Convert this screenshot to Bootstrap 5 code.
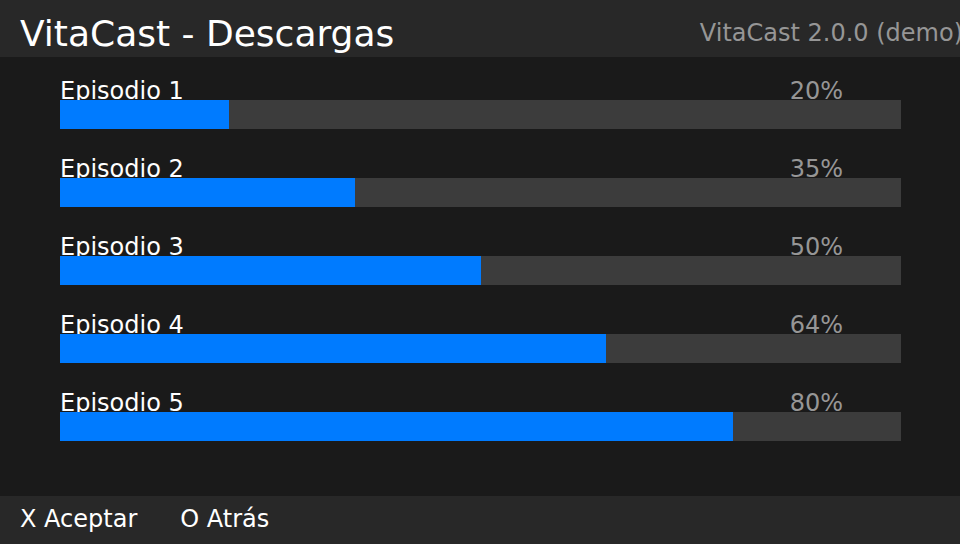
<!DOCTYPE html>
<html lang="es">
<head>
<meta charset="utf-8">
<meta name="viewport" content="width=device-width, initial-scale=1">
<title>VitaCast - Descargas</title>
<link href="https://cdn.jsdelivr.net/npm/bootstrap@5.3.0/dist/css/bootstrap.min.css" rel="stylesheet">
<style>
body { background: #1a1a1a; color: #fff; font-family: "DejaVu Sans", sans-serif; font-size: 24px; line-height: 28px; }
.bar-band { background: #282828; white-space: nowrap; }
.top-band { padding: 13px 0 2px 20px; }
.app-title { font-size: 36px; line-height: 42px; }
.app-version { line-height: 40px; margin-right: -3px; }
.muted-text { color: #969696; }
.downloads { padding: 20px 59px 20px 60px; }
.download-head { height: 23px; padding-right: 58px; }
.download .progress { height: 29px; background: #3c3c3c; border-radius: 0; margin-bottom: 26px; position: relative; }
.download .progress-bar { background: #007bff; }
.bottom-band { padding: 9px 20px 11px; gap: 43px; }
.key-btn { font: inherit; color: inherit; background: none; }
</style>
</head>
<body class="d-flex flex-column min-vh-100">
<header class="bar-band top-band d-flex justify-content-between align-items-start overflow-hidden">
  <h1 class="app-title fw-normal m-0">VitaCast - Descargas</h1>
  <span class="app-version muted-text">VitaCast 2.0.0 (demo)</span>
</header>
<main class="downloads flex-grow-1">
  <div class="download">
    <div class="download-head d-flex justify-content-between"><span id="ep1">Episodio 1</span><span class="muted-text">20%</span></div>
    <div class="progress" role="progressbar" aria-labelledby="ep1" aria-valuenow="20" aria-valuemin="0" aria-valuemax="100"><div class="progress-bar" style="width:20.1%"></div></div>
  </div>
  <div class="download">
    <div class="download-head d-flex justify-content-between"><span id="ep2">Episodio 2</span><span class="muted-text">35%</span></div>
    <div class="progress" role="progressbar" aria-labelledby="ep2" aria-valuenow="35" aria-valuemin="0" aria-valuemax="100"><div class="progress-bar" style="width:35.1%"></div></div>
  </div>
  <div class="download">
    <div class="download-head d-flex justify-content-between"><span id="ep3">Episodio 3</span><span class="muted-text">50%</span></div>
    <div class="progress" role="progressbar" aria-labelledby="ep3" aria-valuenow="50" aria-valuemin="0" aria-valuemax="100"><div class="progress-bar" style="width:50%"></div></div>
  </div>
  <div class="download">
    <div class="download-head d-flex justify-content-between"><span id="ep4">Episodio 4</span><span class="muted-text">64%</span></div>
    <div class="progress" role="progressbar" aria-labelledby="ep4" aria-valuenow="64" aria-valuemin="0" aria-valuemax="100"><div class="progress-bar" style="width:64.9%"></div></div>
  </div>
  <div class="download">
    <div class="download-head d-flex justify-content-between"><span id="ep5">Episodio 5</span><span class="muted-text">80%</span></div>
    <div class="progress" role="progressbar" aria-labelledby="ep5" aria-valuenow="80" aria-valuemin="0" aria-valuemax="100"><div class="progress-bar" style="width:80%"></div></div>
  </div>
</main>
<footer class="bar-band bottom-band d-flex">
  <button type="button" class="key-btn border-0 p-0">X Aceptar</button>
  <button type="button" class="key-btn border-0 p-0">O Atrás</button>
</footer>
<script src="https://cdn.jsdelivr.net/npm/bootstrap@5.3.0/dist/js/bootstrap.bundle.min.js"></script>
</body>
</html>
